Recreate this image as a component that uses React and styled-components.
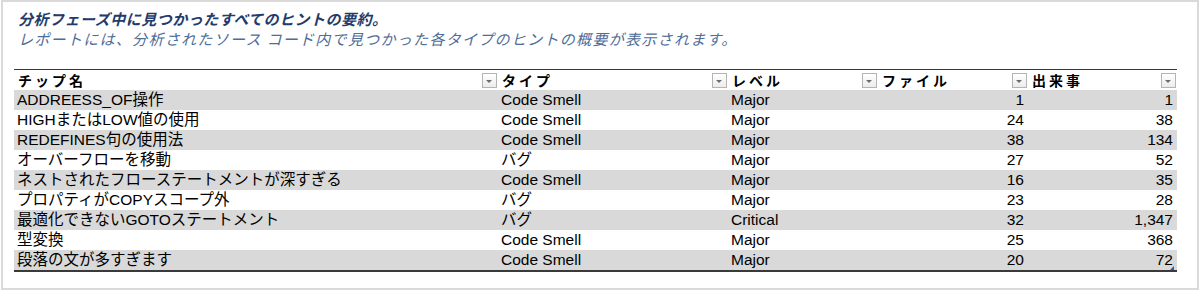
import React from 'react'
import styled, { createGlobalStyle } from 'styled-components'

const GlobalStyle = createGlobalStyle`
  html, body {
    margin: 0;
    padding: 0;
    background: #ffffff;
  }
  body {
    font-family: "Liberation Sans", "Noto Sans CJK JP", sans-serif;
  }
`

const rows = [
  ['ADDREESS_OF操作', 'Code Smell', 'Major', '1', '1'],
  ['HIGHまたはLOW値の使用', 'Code Smell', 'Major', '24', '38'],
  ['REDEFINES句の使用法', 'Code Smell', 'Major', '38', '134'],
  ['オーバーフローを移動', 'バグ', 'Major', '27', '52'],
  ['ネストされたフローステートメントが深すぎる', 'Code Smell', 'Major', '16', '35'],
  ['プロパティがCOPYスコープ外', 'バグ', 'Major', '23', '28'],
  ['最適化できないGOTOステートメント', 'バグ', 'Critical', '32', '1,347'],
  ['型変換', 'Code Smell', 'Major', '25', '368'],
  ['段落の文が多すぎます', 'Code Smell', 'Major', '20', '72'],
]

const headers = ['チップ名', 'タイプ', 'レベル', 'ファイル', '出来事']

const COLS = '484px 230px 150px 150px 149px'

function App() {
  return (
    <Frame>
      <GlobalStyle />
      <Title>分析フェーズ中に見つかったすべてのヒントの要約。</Title>
      <Subtitle>レポートには、分析されたソース コード内で見つかった各タイプのヒントの概要が表示されます。</Subtitle>
      <Table>
        <HeaderRow>
          {headers.map((h) => (
            <HeaderCell key={h}>
              <span>{h}</span>
              <DropButton />
            </HeaderCell>
          ))}
        </HeaderRow>
        {rows.map((r, i) => (
          <Row key={r[0]} shaded={i % 2 === 0}>
            <Cell>{r[0]}</Cell>
            <Cell>{r[1]}</Cell>
            <Cell>{r[2]}</Cell>
            <Cell num>{r[3]}</Cell>
            <Cell num>{r[4]}</Cell>
          </Row>
        ))}
        <ResizeMark />
      </Table>
    </Frame>
  )
}

const Frame = styled.div`
  box-sizing: border-box;
  width: 1198px;
  height: 290px;
  margin-left: 1px;
  border: 2px solid #dadada;
  padding: 7px 0 0 11px;
`

const Title = styled.div`
  font-family: "Noto Sans CJK JP", sans-serif;
  font-size: 15px;
  font-weight: bold;
  font-style: italic;
  color: #1f3c6c;
  line-height: 20px;
  padding-left: 4px;
  letter-spacing: 0.5px;
`

const Subtitle = styled.div`
  font-family: "Noto Sans CJK JP", sans-serif;
  font-size: 15px;
  font-style: italic;
  color: #4e6d99;
  line-height: 20px;
  padding-left: 4px;
  letter-spacing: 1.3px;
`

const Table = styled.div`
  position: relative;
  margin-top: 20px;
  width: 1163px;
  border-top: 1px solid #3a3a3a;
  border-bottom: 2px solid #3a3a3a;
`

const HeaderRow = styled.div`
  display: grid;
  grid-template-columns: ${COLS};
  height: 20px;
  background: #ffffff;
`

const HeaderCell = styled.div`
  display: flex;
  justify-content: space-between;
  align-items: center;
  font-family: "Noto Sans CJK JP", sans-serif;
  font-size: 14px;
  font-weight: bold;
  letter-spacing: 3px;
  color: #000;
  padding: 0 1px 0 4px;
  white-space: nowrap;
`

const DropButton = styled.div`
  width: 13px;
  height: 13px;
  border: 1px solid #b4b4b4;
  background: linear-gradient(#ffffff, #ececec);
  position: relative;
  flex: none;

  &::after {
    content: '';
    position: absolute;
    left: 3px;
    top: 6px;
    border-left: 3px solid transparent;
    border-right: 3px solid transparent;
    border-top: 3px solid #6c6c6c;
  }
`

const Row = styled.div`
  display: grid;
  grid-template-columns: ${COLS};
  height: 20px;
  background: ${(p) => (p.shaded ? '#d9d9d9' : '#ffffff')};
`

const Cell = styled.div`
  font-family: "Liberation Sans", "Noto Sans CJK JP", sans-serif;
  font-size: 15.5px;
  line-height: 20px;
  color: #000;
  white-space: nowrap;
  padding: 0 ${(p) => (p.num ? '4px' : '3px')};
  text-align: ${(p) => (p.num ? 'right' : 'left')};
`

const ResizeMark = styled.div`
  position: absolute;
  right: 3px;
  bottom: 0;
  width: 0;
  height: 0;
  border-left: 4px solid transparent;
  border-bottom: 4px solid #2f55c8;
`

export default App
